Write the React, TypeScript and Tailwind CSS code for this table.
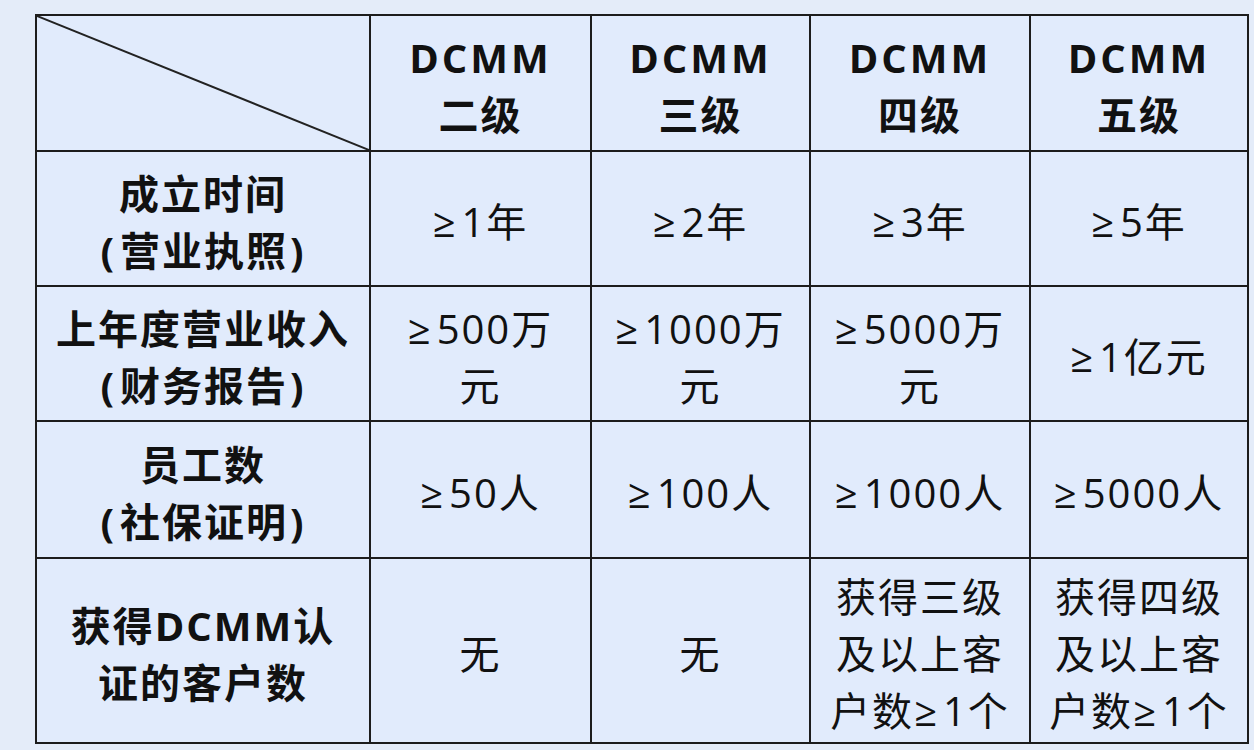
import React from "react";

const font = { fontFamily: '"Open Sans", "Noto Sans CJK SC", sans-serif' };

function Cell({ children, bold = false }: { children: React.ReactNode; bold?: boolean }) {
  return (
    <div
      className={`bg-[#e1ebfc] flex items-center justify-center pt-[6px] text-center text-[40px] leading-[57px] tracking-[2px] text-[#111] ${bold ? "font-bold" : "font-normal"}`}
    >
      <div>{children}</div>
    </div>
  );
}

function Ge() {
  return <span className="tracking-[6px]">≥</span>;
}

function Paren({ text }: { text: string }) {
  return (
    <>
      <span className="tracking-[6px]">(</span>
      {text}
      <span className="ml-[2px]">)</span>
    </>
  );
}

export default function App() {
  const heads = ["二级", "三级", "四级", "五级"];
  return (
    <div className="w-[1254px] h-[750px] bg-[#e4ecf9] pt-[14px] pl-[35px] overflow-hidden" style={font}>
      <div className="grid grid-cols-[332px_219px_217px_218px_216px] grid-rows-[134px_133px_133px_135px_183px] gap-[2px] p-[2px] bg-[#1c1c1c] w-[1214px]">
        <div className="bg-[#e1ebfc] relative">
          <svg className="absolute inset-0 w-full h-full" viewBox="0 0 332 134" preserveAspectRatio="none">
            <line x1="0" y1="0" x2="332" y2="134" stroke="#222" strokeWidth="2" />
          </svg>
        </div>
        {heads.map((h) => (
          <Cell bold key={h}>
            <span className="tracking-[3px]">DCMM</span>
            <br />
            {h}
          </Cell>
        ))}

        <Cell bold>
          成立时间
          <br />
          <Paren text="营业执照" />
        </Cell>
        <Cell><Ge />1年</Cell>
        <Cell><Ge />2年</Cell>
        <Cell><Ge />3年</Cell>
        <Cell><Ge />5年</Cell>

        <Cell bold>
          上年度营业收入
          <br />
          <Paren text="财务报告" />
        </Cell>
        <Cell>
          <Ge />500万
          <br />元
        </Cell>
        <Cell>
          <Ge />1000万
          <br />元
        </Cell>
        <Cell>
          <Ge />5000万
          <br />元
        </Cell>
        <Cell><Ge />1亿元</Cell>

        <Cell bold>
          员工数
          <br />
          <Paren text="社保证明" />
        </Cell>
        <Cell><Ge />50人</Cell>
        <Cell><Ge />100人</Cell>
        <Cell><Ge />1000人</Cell>
        <Cell><Ge />5000人</Cell>

        <Cell bold>
          获得DCMM认
          <br />
          证的客户数
        </Cell>
        <Cell>无</Cell>
        <Cell>无</Cell>
        <Cell>
          获得三级
          <br />
          及以上客
          <br />
          户数<Ge />1个
        </Cell>
        <Cell>
          获得四级
          <br />
          及以上客
          <br />
          户数<Ge />1个
        </Cell>
      </div>
    </div>
  );
}
